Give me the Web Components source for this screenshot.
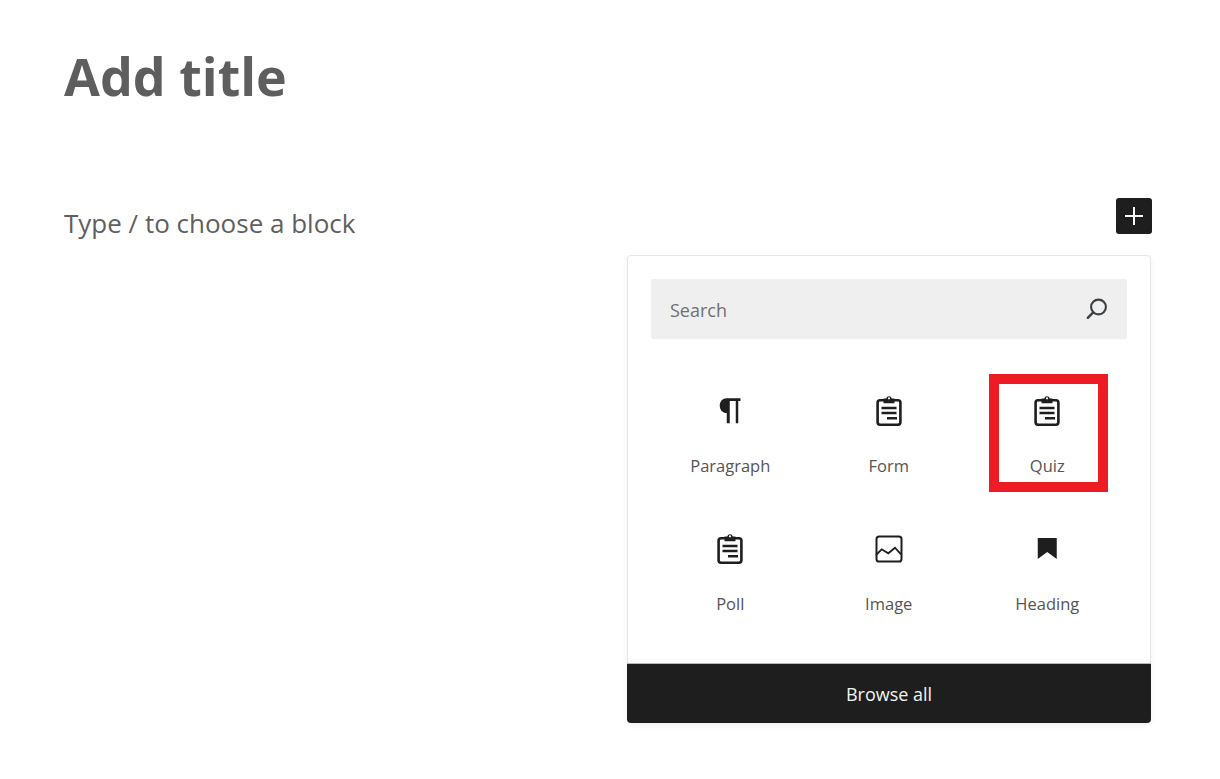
<!DOCTYPE html>
<html lang="en">
<head>
<meta charset="utf-8">
<title>Add title</title>
<style>
  html, body { margin: 0; background: #fff; }
  body { font-family: "Open Sans", "Noto Sans", sans-serif; width: 1220px; height: 779px; overflow: hidden; }
</style>
</head>
<body>
<editor-page>
  <span slot="title">Add title</span>
  <span slot="placeholder">Type / to choose a block</span>
  <block-inserter>
    <inserter-item icon="paragraph">Paragraph</inserter-item>
    <inserter-item icon="clipboard">Form</inserter-item>
    <inserter-item icon="clipboard" marked>Quiz</inserter-item>
    <inserter-item icon="clipboard">Poll</inserter-item>
    <inserter-item icon="image">Image</inserter-item>
    <inserter-item icon="bookmark">Heading</inserter-item>
  </block-inserter>
</editor-page>

<script>
/* page: title, empty block line, then the inserter popup */
class EditorPage extends HTMLElement {
  constructor() {
    super();
    this.attachShadow({ mode: "open" });
    this.shadowRoot.innerHTML = `
      <style>
        :host { display: block; padding: 40px 68px 0 64px; }
        .title { margin: 0; height: 72px; font-size: 52px; line-height: 72px; font-weight: 700; color: #5e5e5e; }
        .block { display: flex; justify-content: space-between; align-items: center; margin-top: 86px; height: 36px; }
        .placeholder { padding-top: 14px; font-size: 26px; color: #5f5f5f; }
        .plus {
          display: flex; align-items: center; justify-content: center;
          width: 36px; height: 36px; border-radius: 3px; background: #1e1e1e;
        }
        .popup-wrap { display: flex; justify-content: flex-end; margin-top: 21px; padding-right: 1px; }
      </style>
      <h1 class="title"><slot name="title"></slot></h1>
      <div class="block">
        <span class="placeholder"><slot name="placeholder"></slot></span>
        <div class="plus">
          <svg width="20" height="20" viewBox="0 0 20 20"><path d="M10 1v18M1 10h18" stroke="#fff" stroke-width="2" fill="none"/></svg>
        </div>
      </div>
      <div class="popup-wrap"><slot></slot></div>
    `;
  }
}
customElements.define("editor-page", EditorPage);

class BlockInserter extends HTMLElement {
  constructor() {
    super();
    this.attachShadow({ mode: "open" });
    this.shadowRoot.innerHTML = `
      <style>
        :host {
          display: block; box-sizing: border-box; width: 524px; height: 468px;
          border: 1px solid #e6e6e6; border-radius: 4px; background: #fff;
          box-shadow: 0 2px 6px rgba(0,0,0,.06);
        }
        .inner { display: flex; flex-direction: column; height: 100%; }
        .search {
          flex: none; display: flex; align-items: center; justify-content: space-between;
          box-sizing: border-box; height: 60px; margin: 23px 23px 0;
          padding: 2px 18px 0 19px; border-radius: 2px; background: #efefef;
          font-size: 18px; color: #707070;
        }
        .search svg { margin-top: -2px; }
        .grid {
          flex: 1; min-height: 0; display: grid; grid-template-columns: repeat(3, 158.5px);
          grid-auto-rows: 138px; padding: 54px 23px 0 23px;
        }
        .browse {
          flex: none; display: flex; align-items: center; justify-content: center;
          height: 59px; margin: 0 -1px -1px; border-top: 1px solid #b9b9b9;
          border-radius: 0 0 4px 4px; background: #1e1e1e;
          font-size: 18px; font-weight: 500; color: #f2f2f2;
        }
      </style>
      <div class="inner">
        <div class="search">
          <span>Search</span>
          <svg width="24" height="24" viewBox="0 0 24 24" fill="none" stroke="#3c3f44">
            <circle cx="13.5" cy="10" r="7.4" stroke-width="2.1"/>
            <path d="M8.2 15.4 2.8 20.8" stroke-width="2.4" stroke-linecap="round"/>
          </svg>
        </div>
        <div class="grid"><slot></slot></div>
        <div class="browse">Browse all</div>
      </div>
    `;
  }
}
customElements.define("block-inserter", BlockInserter);

const ICONS = {
  paragraph: `<path d="M14.500 5.300H28.500V8H26.250V30.300H23.750V8H17.750V30.300H14.750V20C10.500 20 7.750 16.800 7.750 12.700C7.750 8.400 10.700 5.300 14.500 5.300Z" fill="#1e1e1e"/>`,
  clipboard: `
    <rect x="6.600" y="7.300" width="22.800" height="24.400" rx="2.400" fill="none" stroke="#1e1e1e" stroke-width="2.600"/>
    <path d="M12.500 5.500h2.700a2.900 2.900 0 0 1 5.600 0h2.700v4.700h-11z" fill="#1e1e1e"/>
    <circle cx="18" cy="5.300" r="1.100" fill="#fff"/>
    <path d="M10.500 13.700h15v2.500h-15zM10.500 18.700h15v2.500h-15zM16 24h10v2.500H16z" fill="#1e1e1e"/>`,
  image: `
    <rect x="5.500" y="5.500" width="25" height="25" rx="2.600" fill="none" stroke="#1e1e1e" stroke-width="2"/>
    <path d="M5 24l5.700-5.700 6.600 4 6.700-5.600 6 6.600" fill="none" stroke="#1e1e1e" stroke-width="1.800"/>`,
  bookmark: `<path d="M8.750 7h19v21l-9.500-7-9.500 7z" fill="#1e1e1e"/>`
};

/* one block choice: icon over label. "marked" adds the red annotation box */
class InserterItem extends HTMLElement {
  constructor() {
    super();
    this.attachShadow({ mode: "open" });
  }

  connectedCallback() {
    const icon = ICONS[this.getAttribute("icon")] || "";
    this.shadowRoot.innerHTML = `
      <style>
        :host { display: block; position: relative; }
        .item { display: flex; flex-direction: column; align-items: center; }
        svg { display: block; width: 36px; height: 36px; }
        .label { margin-top: 25px; font-size: 16.500px; line-height: 24px; color: #555; }
        .mark {
          position: absolute; left: 21px; top: -19px; width: 99px; height: 98px;
          border: 10px solid #ed1c24;
        }
      </style>
      <div class="item">
        <svg viewBox="0 0 36 36">${icon}</svg>
        <span class="label"><slot></slot></span>
      </div>
      ${this.hasAttribute("marked") ? '<div class="mark"></div>' : ""}
    `;
  }
}
customElements.define("inserter-item", InserterItem);
</script>
</body>
</html>
